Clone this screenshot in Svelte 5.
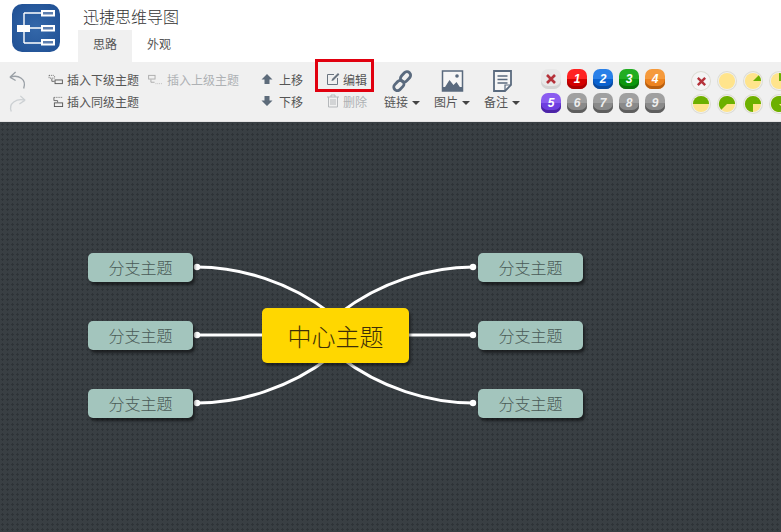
<script>
    const branches = [
        { side: 'left', top: 131 },
        { side: 'left', top: 199 },
        { side: 'left', top: 267 },
        { side: 'right', top: 131 },
        { side: 'right', top: 199 },
        { side: 'right', top: 267 }
    ]

    const priorities = [
        { n: 1, color: 'red' },
        { n: 2, color: 'blue' },
        { n: 3, color: 'green' },
        { n: 4, color: 'orange' },
        { n: 5, color: 'purple' },
        { n: 6, color: 'gray' },
        { n: 7, color: 'gray' },
        { n: 8, color: 'gray' },
        { n: 9, color: 'gray' }
    ]

    // green part of each progress dot: 0, 1/8, 1/4, 1/2, 5/8, 3/4, 7/8
    const progress = [
        null,
        'M10 10 L19 10 A9 9 0 0 0 16.36 3.64 Z',
        'M10 10 L10 1 A9 9 0 0 1 19 10 Z',
        'M1 10 A9 9 0 0 1 19 10 Z',
        'M10 10 L3.64 16.36 A9 9 0 1 1 19 10 Z',
        'M10 10 L10 19 A9 9 0 1 1 19 10 Z',
        'M10 10 L16.36 16.36 A9 9 0 1 1 19 10 Z'
    ]
</script>

<div class="app">
    <header class="top">
        <svg class="logo" viewBox="0 0 48 48" aria-hidden="true">
            <defs>
                <radialGradient id="logo-bg" cx="0.5" cy="0.5" r="0.7">
                    <stop offset="0" stop-color="#3468aa" />
                    <stop offset="1" stop-color="#1f4f93" />
                </radialGradient>
            </defs>
            <rect width="48" height="48" rx="10" fill="url(#logo-bg)" />
            <path d="M12 24H29M12 9H29M12 39H29M12 9V39" stroke="#fff" stroke-width="1.4" fill="none" />
            <rect x="5" y="21" width="13" height="7" fill="#fff" />
            <rect x="30" y="7" width="12" height="4.5" fill="#5d7fb0" stroke="#fff" stroke-width="2" />
            <rect x="30" y="22" width="12" height="4.5" fill="#5d7fb0" stroke="#fff" stroke-width="2" />
            <rect x="30" y="36" width="12" height="4.5" fill="#5d7fb0" stroke="#fff" stroke-width="2" />
        </svg>
        <div class="head-text">
            <div class="title">迅捷思维导图</div>
            <nav class="tabs">
                <span class="tab active">思路</span>
                <span class="tab">外观</span>
            </nav>
        </div>
    </header>

    <section class="toolbar">
        <div class="history">
            <svg viewBox="0 0 20 20" aria-hidden="true">
                <path d="M2 7 L8 1.5 M2 7 L8 10.5 M2 7 C11 4 20 9 16.5 19" stroke="#9aa0a6" stroke-width="1.4" fill="none" />
            </svg>
            <svg viewBox="0 0 20 20" aria-hidden="true">
                <path d="M18 7 L13 2.5 M18 7 L12 11 M18 7 C9 5 0 10 3.5 19" stroke="#ccd0d3" stroke-width="1.4" fill="none" />
            </svg>
        </div>

        <div class="insert">
            <span class="cmd">
                <svg viewBox="0 0 16 12" aria-hidden="true">
                    <path d="M1 1.5H7M1 1.5V4.5H7V1.5" stroke="#666" stroke-dasharray="1 1" fill="none" />
                    <path d="M4 5V8H7" stroke="#666" fill="none" />
                    <rect x="7.5" y="6.5" width="8" height="4" stroke="#555" fill="none" />
                </svg>
                插入下级主题
            </span>
            <span class="cmd off">
                <svg viewBox="0 0 16 12" aria-hidden="true">
                    <rect x="0.5" y="1.5" width="7" height="4" stroke="#aaa" fill="none" />
                    <path d="M3 6V9H7" stroke="#aaa" fill="none" />
                    <path d="M8 10.5H16" stroke="#bbb" stroke-dasharray="1 1" fill="none" />
                </svg>
                插入上级主题
            </span>
            <span class="cmd">
                <svg class="sibling" viewBox="0 0 16 12" aria-hidden="true">
                    <path d="M3 1.5H12" stroke="#666" stroke-dasharray="1 1" fill="none" />
                    <path d="M3 1.5V5H7V7" stroke="#666" fill="none" />
                    <rect x="3.5" y="7.5" width="9" height="4" stroke="#555" fill="none" />
                </svg>
                插入同级主题
            </span>
        </div>

        <div class="move">
            <span class="cmd">
                <svg viewBox="0 0 12 12" aria-hidden="true"><path d="M6 1 L11.5 6.5 H8.5 V11 H3.5 V6.5 H0.5 Z" fill="#5d6b7a" /></svg>
                上移
            </span>
            <span class="cmd">
                <svg viewBox="0 0 12 12" aria-hidden="true"><path d="M6 11 L11.5 5.5 H8.5 V1 H3.5 V5.5 H0.5 Z" fill="#5d6b7a" /></svg>
                下移
            </span>
        </div>

        <div class="edit">
            <span class="cmd">
                <svg viewBox="0 0 14 14" aria-hidden="true">
                    <path d="M8 2.5H1.5V12.5H11.5V6" stroke="#6a7480" fill="none" />
                    <path d="M5.5 9 L6 7 L12 1 L13.4 2.4 L7.4 8.4 Z" fill="#6a7480" />
                </svg>
                编辑
            </span>
            <span class="cmd off">
                <svg viewBox="0 0 14 14" aria-hidden="true">
                    <path d="M1 3H13M5 3V1H9V3M2.5 3V13H11.5V3M5 5V11M7 5V11M9 5V11" stroke="#b5b8bb" fill="none" />
                </svg>
                删除
            </span>
            <div class="highlight"></div>
        </div>

        <div class="media">
            <div class="drop">
                <svg viewBox="0 0 26 26" aria-hidden="true">
                    <g fill="none" stroke="#5a6a7e" stroke-width="3.4">
                        <rect x="12.5" y="1.6" width="8.5" height="13.5" rx="4.2" transform="rotate(43 17 8)" />
                        <rect x="4.5" y="11" width="8.5" height="13.5" rx="4.2" transform="rotate(43 8 18)" />
                    </g>
                </svg>
                <span>链接<i></i></span>
            </div>
            <div class="drop">
                <svg viewBox="0 0 22 22" aria-hidden="true">
                    <rect x="1" y="1" width="20" height="20" fill="#f6f6f6" stroke="#5a6a7e" stroke-width="1.5" />
                    <path d="M1 21 L8 10 L12 15 L15 12 L21 21 Z" fill="#5a6a7e" />
                    <rect x="1" y="17" width="20" height="4" fill="#5a6a7e" />
                    <circle cx="15.5" cy="6" r="1.8" fill="#5a6a7e" />
                </svg>
                <span>图片<i></i></span>
            </div>
            <div class="drop">
                <svg viewBox="0 0 20 22" aria-hidden="true">
                    <path d="M1.5 1H18.5V15L12.5 21H1.5Z" fill="#f6f6f6" stroke="#5a6a7e" stroke-width="1.8" />
                    <path d="M12.5 21V15H18.5" fill="none" stroke="#5a6a7e" stroke-width="1.2" />
                    <path d="M5 6H15M5 9.5H15M5 13H15" stroke="#5a6a7e" stroke-width="1.4" />
                </svg>
                <span>备注<i></i></span>
            </div>
        </div>

        <div class="priorities">
            <span class="pri clear"><svg viewBox="0 0 12 12" aria-hidden="true"><path d="M2 2L10 10M10 2L2 10" stroke="#b5323a" stroke-width="2.6" /></svg></span>
            {#each priorities as p}
                <span class="pri {p.color}">{p.n}</span>
            {/each}
        </div>

        <div class="dots">
            <span class="dot clear"><svg viewBox="0 0 12 12" aria-hidden="true"><path d="M2 2L10 10M10 2L2 10" stroke="#b5323a" stroke-width="2.6" /></svg></span>
            {#each progress as d}
                <span class="dot">
                    <svg viewBox="0 0 20 20" aria-hidden="true">
                        <circle cx="10" cy="10" r="9" fill="#ffe48c" />
                        {#if d}<path d={d} fill="#6cb000" />{/if}
                    </svg>
                </span>
            {/each}
        </div>
    </section>

    <main class="canvas">
        <svg class="links" viewBox="0 0 781 410" aria-hidden="true">
            <g fill="none" stroke="#fff" stroke-width="3">
                <path d="M197 145 C240 145 290 160 330 191" />
                <path d="M197 213 H336" />
                <path d="M197 281 C240 281 290 266 330 235" />
                <path d="M473 145 C430 145 380 160 340 191" />
                <path d="M473 213 H334" />
                <path d="M473 281 C430 281 380 266 340 235" />
            </g>
            <g fill="#fff">
                <circle cx="197" cy="145" r="3.2" />
                <circle cx="197" cy="213" r="3.2" />
                <circle cx="197" cy="281" r="3.2" />
                <circle cx="473" cy="145" r="3.2" />
                <circle cx="473" cy="213" r="3.2" />
                <circle cx="473" cy="281" r="3.2" />
            </g>
        </svg>
        <div class="center">中心主题</div>
        {#each branches as b}
            <div class="branch {b.side}" style="top: {b.top}px">分支主题</div>
        {/each}
    </main>
</div>

<style>
    :global(body) {
        margin: 0;
    }

    .app {
        width: 781px;
        height: 532px;
        display: flex;
        flex-direction: column;
        overflow: hidden;
        background: #fff;
        font-family: "Noto Sans CJK SC", "Liberation Sans", sans-serif;
    }

    .top {
        height: 62px;
        flex: none;
        display: flex;
        padding-left: 12px;
        box-sizing: border-box;
    }

    .logo {
        width: 48px;
        height: 48px;
        margin-top: 4px;
    }

    .head-text {
        margin-left: 18px;
    }

    .title {
        margin: 5px 0 0 5px;
        height: 25px;
        line-height: 22px;
        font-size: 16px;
        font-weight: 300;
        color: #333;
    }

    .tabs {
        display: flex;
    }

    .tab {
        width: 54px;
        height: 32px;
        line-height: 27px;
        text-align: center;
        font-size: 12px;
        color: #555;
    }

    .tab.active {
        background: #f0f0f0;
    }

    .toolbar {
        height: 60px;
        flex: none;
        display: flex;
        background: #f0f0f0;
        border-bottom: 1px solid #e2e2e2;
        box-sizing: border-box;
        font-size: 12px;
        color: #555;
    }

    .toolbar > div {
        flex: none;
        box-sizing: border-box;
    }

    .history {
        width: 48px;
        padding: 8px 0 0 8px;
        display: flex;
        flex-direction: column;
        gap: 3px;
    }

    .history svg {
        width: 19px;
        height: 20px;
    }

    .cmd {
        display: flex;
        align-items: center;
        gap: 4px;
        height: 22px;
        white-space: nowrap;
    }

    .cmd.off {
        color: #aeb1b4;
    }

    .insert {
        width: 212px;
        padding-top: 6px;
        display: grid;
        grid-template-columns: 92px 100px;
        column-gap: 8px;
        align-content: start;
    }

    .insert svg {
        width: 15px;
        height: 11px;
    }

    .insert .sibling {
        margin-left: 3px;
        margin-right: -3px;
    }

    .move {
        width: 55px;
        padding: 6px 0 0 1px;
    }

    .move svg {
        width: 12px;
        height: 12px;
    }

    .move .cmd {
        gap: 6px;
    }

    .edit {
        width: 68px;
        padding: 6px 0 0 11px;
        position: relative;
    }

    .edit .cmd {
        gap: 3px;
    }

    .edit svg {
        width: 14px;
        height: 14px;
    }

    .highlight {
        position: absolute;
        left: 0;
        top: -3px;
        width: 59px;
        height: 33px;
        box-sizing: border-box;
        border: 3px solid #e1000f;
    }

    .media {
        display: flex;
        gap: 12px;
        width: 158px;
    }

    .drop {
        width: 38px;
        display: flex;
        flex-direction: column;
        align-items: center;
        padding-top: 8px;
        white-space: nowrap;
    }

    .drop svg {
        width: 23px;
        height: 22px;
    }

    .drop span {
        margin-top: 1px;
        line-height: 18px;
    }

    .drop i {
        display: inline-block;
        margin-left: 4px;
        vertical-align: 2px;
        border: 4px solid transparent;
        border-top-color: #444;
        border-bottom: 0;
    }

    .priorities {
        width: 151px;
        padding-top: 7px;
        display: grid;
        grid-template-columns: repeat(5, 20px);
        grid-auto-rows: 20px;
        column-gap: 6px;
        row-gap: 4px;
        align-content: start;
    }

    .pri {
        width: 20px;
        height: 20px;
        border-radius: 7px;
        display: flex;
        align-items: center;
        justify-content: center;
        color: #fff;
        font: italic bold 12px "Liberation Sans", sans-serif;
    }

    .pri svg {
        width: 12px;
        height: 12px;
    }

    .pri.clear {
        background: #e8e8e8;
        box-shadow: inset 0 -3px 0 #d4d4d4;
    }

    .pri.red {
        background: linear-gradient(#f22 50%, #d30000 50%);
        box-shadow: inset 0 -3px 0 #a00;
    }

    .pri.blue {
        background: linear-gradient(#2a80e8 50%, #0a62d0 50%);
        box-shadow: inset 0 -3px 0 #0a4a9e;
    }

    .pri.green {
        background: linear-gradient(#22ad22 50%, #0c960c 50%);
        box-shadow: inset 0 -3px 0 #0a700a;
    }

    .pri.orange {
        background: linear-gradient(#f59a3c 50%, #ee8420 50%);
        box-shadow: inset 0 -3px 0 #b85f10;
    }

    .pri.purple {
        background: linear-gradient(#8a5cf0 50%, #6e3ee0 50%);
        box-shadow: inset 0 -3px 0 #4c24a6;
    }

    .pri.gray {
        background: linear-gradient(#a0a0a0 50%, #8a8a8a 50%);
        box-shadow: inset 0 -3px 0 #5e5e5e;
        color: #eee;
    }

    .dots {
        padding-top: 10px;
        display: grid;
        grid-template-columns: repeat(4, 18px);
        grid-auto-rows: 18px;
        column-gap: 8px;
        row-gap: 5px;
        align-content: start;
    }

    .dot {
        width: 18px;
        height: 18px;
        border-radius: 50%;
        display: flex;
        align-items: center;
        justify-content: center;
        box-shadow: 0 0 0 1px #dcdcd4;
    }

    .dot svg {
        width: 18px;
        height: 18px;
        display: block;
    }

    .dot.clear {
        background: #f4f4f4;
    }

    .dot.clear svg {
        width: 11px;
        height: 11px;
    }

    .canvas {
        flex: 1;
        position: relative;
        background-color: #393f43;
        background-image: radial-gradient(#2e3337 1px, transparent 1.2px);
        background-size: 5px 5px;
    }

    .links {
        position: absolute;
        inset: 0;
        width: 781px;
        height: 410px;
    }

    .center {
        position: absolute;
        left: 262px;
        top: 186px;
        width: 147px;
        height: 55px;
        border-radius: 5px;
        background: #ffd700;
        box-shadow: 2px 3px 3px rgba(0, 0, 0, 0.45);
        color: #3d2f08;
        font-size: 24px;
        font-weight: 300;
        line-height: 55px;
        text-align: center;
    }

    .branch {
        position: absolute;
        width: 105px;
        height: 29px;
        border-radius: 5px;
        background: #a3c5bd;
        box-shadow: 2px 3px 3px rgba(0, 0, 0, 0.5);
        color: #4a5a56;
        font-size: 16px;
        font-weight: 300;
        line-height: 29px;
        text-align: center;
    }

    .branch.left {
        left: 88px;
    }

    .branch.right {
        left: 478px;
    }
</style>
